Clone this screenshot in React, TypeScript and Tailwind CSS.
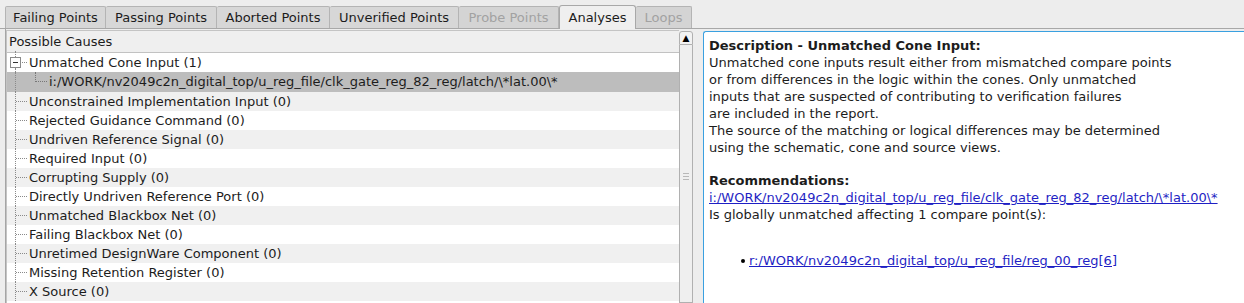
import React from "react";

const tabs = [
  { label: "Failing Points", w: 101, state: "n" },
  { label: "Passing Points", w: 111, state: "n" },
  { label: "Aborted Points", w: 113, state: "n" },
  { label: "Unverified Points", w: 129, state: "n" },
  { label: "Probe Points", w: 100, state: "d" },
  { label: "Analyses", w: 77, state: "s" },
  { label: "Loops", w: 56, state: "d" },
];

const items = [
  "Unconstrained Implementation Input (0)",
  "Rejected Guidance Command (0)",
  "Undriven Reference Signal (0)",
  "Required Input (0)",
  "Corrupting Supply (0)",
  "Directly Undriven Reference Port (0)",
  "Unmatched Blackbox Net (0)",
  "Failing Blackbox Net (0)",
  "Unretimed DesignWare Component (0)",
  "Missing Retention Register (0)",
  "X Source (0)",
];

export default function App() {
  return (
    <div
      className="w-[1244px] h-[303px] overflow-hidden bg-[#ededed] text-[13px] text-[#1c1c1c] flex flex-col"
      style={{ fontFamily: '"DejaVu Sans", "Liberation Sans", sans-serif' }}
    >
      {/* Tab bar */}
      <div className="flex items-end h-[29px] pl-[5px] border-b border-[#a8a8a8] shrink-0">
        {tabs.map((t, i) => (
          <div
            key={t.label}
            style={{ width: t.w }}
            className={
              t.state === "s"
                ? "h-[24px] -mb-px flex items-center justify-center border border-b-0 border-[#a8a8a8] rounded-t-[3px] bg-[#efefef] text-[#1c1c1c]"
                : t.state === "d"
                ? "h-[22px] flex items-center justify-center border border-b-0 border-l-0 border-[#b4b4b4] rounded-t-[2px] bg-[#d4d4d4] text-[#a2a2a2]"
                : i === 0
                ? "h-[22px] flex items-center justify-center border border-b-0 border-[#b4b4b4] rounded-t-[2px] bg-[#d7d7d7] text-[#1c1c1c]"
                : "h-[22px] flex items-center justify-center border border-b-0 border-l-0 border-[#b4b4b4] rounded-t-[2px] bg-[#d7d7d7] text-[#1c1c1c]"
            }
          >
            {t.label}
          </div>
        ))}
      </div>

      <div className="flex flex-1 min-h-0">
        {/* Left panel */}
        <div className="ml-[5px] w-[688px] border-l border-[#a5a5a5] flex min-h-0">
          <div className="flex-1 border-l border-t border-[#c4c4c4] mt-[1px] flex flex-col min-h-0 bg-white">
            <div className="h-[22px] shrink-0 bg-[#efefef] border-b border-[#c2c2c2] flex items-center pl-[2px]">
              Possible Causes
            </div>
            {/* Row 1 */}
            <div className="h-[19px] shrink-0 flex items-center bg-white">
              <div className="relative w-[22px] h-full shrink-0">
                <div className="absolute left-[8px] top-[-2px] h-[6px] border-l border-dotted border-[#8a8a8a]" />
                <div className="absolute left-[3px] top-[4px] w-[11px] h-[11px] border border-[#8a8a8a] bg-white flex items-center justify-center">
                  <div className="w-[5px] h-px bg-[#333]" />
                </div>
                <div className="absolute left-[8px] top-[15px] h-[4px] border-l border-dotted border-[#8a8a8a]" />
                <div className="absolute left-[15px] top-[9px] w-[5px] border-t border-dotted border-[#8a8a8a]" />
              </div>
              <span>Unmatched Cone Input (1)</span>
            </div>
            {/* Row 2 selected child */}
            <div className="h-[20px] shrink-0 flex items-center bg-[#bdbdbd]">
              <div className="relative w-[42px] h-full shrink-0">
                <div className="absolute left-[8px] top-0 h-full border-l border-dotted border-[#8a8a8a]" />
                <div className="absolute left-[28px] top-0 h-[10px] border-l border-dotted border-[#777]" />
                <div className="absolute left-[29px] top-[9px] w-[11px] border-t border-dotted border-[#777]" />
              </div>
              <span>i:/WORK/nv2049c2n_digital_top/u_reg_file/clk_gate_reg_82_reg/latch/\*lat.00\*</span>
            </div>
            {items.map((label, i) => (
              <div
                key={label}
                className={`h-[19px] shrink-0 flex items-center ${
                  i % 2 === 0 ? "bg-[#f0f0f0]" : "bg-white"
                }`}
              >
                <div className="relative w-[22px] h-full shrink-0">
                  <div className="absolute left-[8px] top-0 h-full border-l border-dotted border-[#8a8a8a]" />
                  <div className="absolute left-[9px] top-[9px] w-[11px] border-t border-dotted border-[#8a8a8a]" />
                </div>
                <span>{label}</span>
              </div>
            ))}
          </div>
          {/* Scrollbar */}
          <div className="w-[14px] shrink-0 flex flex-col bg-[#ededed] mt-[2px]">
            <div className="h-[14px] shrink-0 border border-[#b0b0b0] rounded-t-[3px] bg-[#f2f2f2] flex items-center justify-center text-[9px] leading-none text-black">
              ▲
            </div>
            <div className="flex-1 border border-t-0 border-[#b0b0b0] bg-[#efefef] flex items-center justify-center">
              <div className="flex flex-col gap-[2px] mt-[6px]">
                <div className="w-[6px] h-px bg-[#b8b8b8]" />
                <div className="w-[6px] h-px bg-[#b8b8b8]" />
                <div className="w-[6px] h-px bg-[#b8b8b8]" />
              </div>
            </div>
          </div>
        </div>

        {/* Right panel */}
        <div className="ml-[10px] flex-1 mt-[2px] border border-r-0 border-b-0 border-[#3aa0e0] rounded-tl-[3px] bg-white pl-[5px] pt-[5px] leading-[17px] text-[#1c1c1c]">
          <div className="font-bold">Description - Unmatched Cone Input:</div>
          <div>Unmatched cone inputs result either from mismatched compare points</div>
          <div>or from differences in the logic within the cones. Only unmatched</div>
          <div>inputs that are suspected of contributing to verification failures</div>
          <div>are included in the report.</div>
          <div>The source of the matching or logical differences may be determined</div>
          <div>using the schematic, cone and source views.</div>
          <div className="h-[16px]" />
          <div className="font-bold">Recommendations:</div>
          <div className="text-[#1f1fc4] underline">
            i:/WORK/nv2049c2n_digital_top/u_reg_file/clk_gate_reg_82_reg/latch/\*lat.00\*
          </div>
          <div>Is globally unmatched affecting 1 compare point(s):</div>
          <div className="mt-[29px] pl-[32px] flex items-center">
            <span className="w-[4px] h-[4px] rounded-full bg-black mr-[4px]" />
            <span className="text-[#1f1fc4] underline">
              r:/WORK/nv2049c2n_digital_top/u_reg_file/reg_00_reg[6]
            </span>
          </div>
        </div>
      </div>
    </div>
  );
}
